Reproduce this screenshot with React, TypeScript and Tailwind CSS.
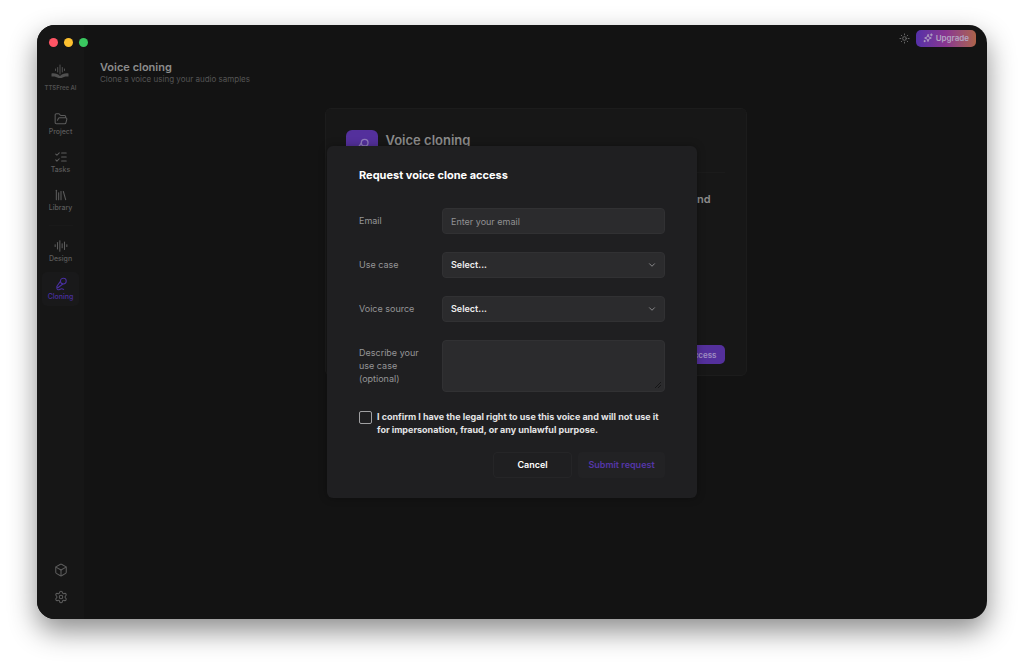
import { useState } from 'react'
import type { LucideIcon } from 'lucide-react'
import {
  AudioLines,
  Box,
  ChevronDown,
  FolderOpen,
  Library,
  ListChecks,
  MicVocal,
  Settings,
  Sun,
} from 'lucide-react'

const mainNav: NavEntry[] = [
  { label: 'Project', icon: FolderOpen },
  { label: 'Tasks', icon: ListChecks },
  { label: 'Library', icon: Library },
]

const voiceNav: NavEntry[] = [
  { label: 'Design', icon: AudioLines },
  { label: 'Cloning', icon: MicVocal, active: true },
]

const useCases = ['Podcast', 'Audiobook', 'Video narration', 'Accessibility']
const voiceSources = ['My own voice', 'Licensed voice actor']

const fieldClass =
  'block w-full rounded-[4px] border border-[#313133] bg-[#2b2b2d] px-2 text-[9px] outline-none'

type NavEntry = { label: string; icon: LucideIcon; active?: boolean }

function Logo() {
  return (
    <svg viewBox="0 0 20 16" className="h-4 w-5" fill="none" aria-hidden="true">
      <path
        d="M5.500 5v1.500M7.700 3.500v4.500M10 1v9M12.300 3.500v4.500M14.500 5v1.500"
        stroke="currentColor"
        strokeLinecap="round"
      />
      <path
        d="M1.500 9.500C5 9 8 10 10 12c2-2 5-3 8.500-2.500v3c-3-.3-5 .2-7 1.500h-3c-2-1.300-4-1.800-7-1.500z"
        fill="currentColor"
      />
    </svg>
  )
}

function SparkleIcon() {
  return (
    <svg
      viewBox="0 0 24 24"
      className="size-[10px]"
      fill="none"
      stroke="currentColor"
      strokeWidth="2.2"
      strokeLinecap="round"
      strokeLinejoin="round"
      aria-hidden="true"
    >
      <path d="M12 4l-2 5.500L4 12l6 2.500 2 6 2-6 6-2.500-6-2.500z" />
      <path d="M20 2v5M17.500 4.500h5M4 18v3M2.500 19.500h3" />
    </svg>
  )
}

function NavItem({ label, icon: Icon, active }: NavEntry) {
  return (
    <a
      href="#"
      aria-current={active ? 'page' : undefined}
      className={
        active
          ? 'flex h-[34px] w-[37px] flex-col items-center justify-center gap-0.5 rounded-[5px] bg-[#19191a] text-[#4a30a0]'
          : 'flex h-[34px] w-[37px] flex-col items-center justify-center gap-0.5 rounded-[5px] text-[#5c5c5c]'
      }
    >
      <Icon className="size-[14px]" strokeWidth={1.8} />
      <span className="text-[7px] leading-[8px] font-medium">{label}</span>
    </a>
  )
}

function Sidebar() {
  return (
    <aside className="flex w-[47px] shrink-0 flex-col items-center bg-[#161616] pt-[13px] pb-[15px]">
      <div className="ml-3 flex gap-[6px] self-start">
        <span className="size-[9px] shrink-0 rounded-full bg-[#ff5565]" />
        <span className="size-[9px] shrink-0 rounded-full bg-[#fdc02f]" />
        <span className="size-[9px] shrink-0 rounded-full bg-[#3ac860]" />
      </div>
      <div className="mt-[17px] flex flex-col items-center gap-1 text-[#505050]">
        <Logo />
        <span className="text-[6px] leading-[8px] font-semibold whitespace-nowrap">TTSFree AI</span>
      </div>
      <nav className="mt-[15px] flex flex-col items-center gap-1">
        {mainNav.map((item) => (
          <NavItem key={item.label} {...item} />
        ))}
        <div className="my-1 h-px w-6 bg-[#191919]" />
        {voiceNav.map((item) => (
          <NavItem key={item.label} {...item} />
        ))}
      </nav>
      <div className="mt-auto flex flex-col gap-[13px] text-[#5c5c5c]">
        <button type="button" aria-label="Models">
          <Box className="size-[14px]" strokeWidth={1.8} />
        </button>
        <button type="button" aria-label="Settings">
          <Settings className="size-[14px]" strokeWidth={1.8} />
        </button>
      </div>
    </aside>
  )
}

function TopBar() {
  return (
    <div className="flex h-[26px] items-center justify-end gap-[6px] pr-[11px]">
      <button type="button" aria-label="Toggle theme" className="text-[#6c6c6c]">
        <Sun className="size-[11px]" />
      </button>
      <button
        type="button"
        className="flex h-[17px] items-center gap-[3px] rounded-[5px] bg-linear-to-r from-[#5530a8] via-[#8a3590] to-[#ad6248] px-[7px] text-[8px] font-semibold text-[#b4a6c4]"
      >
        <SparkleIcon />
        Upgrade
      </button>
    </div>
  )
}

function CloningCard() {
  return (
    <section className="mx-auto mt-6 flex h-[268px] w-[422px] flex-col rounded-[6px] border border-[#1c1c1c] bg-[#171717] pt-[21px] pr-[21px] pb-[11px] pl-5">
      <div className="flex items-start gap-2">
        <span className="flex size-8 items-center justify-center rounded-[6px] bg-[#54309c] text-[#8f7bbb]">
          <MicVocal className="size-4" />
        </span>
        <h2 className="pt-[2px] text-[13px] leading-4 font-semibold text-[#8c8c8c]">Voice cloning</h2>
      </div>
      <div className="mt-[10px] h-px bg-[#1b1b1b]" />
      <p className="mt-[18px] pr-[14px] text-right text-[11px] leading-4 font-semibold text-[#8c8c8c]">
        Request access to clone a voice for your projects and
      </p>
      <button
        type="button"
        className="mt-auto h-[19px] self-end rounded-[5px] bg-[#54309c] px-2 text-[8px] font-semibold text-[#a191c4]"
      >
        Request access
      </button>
    </section>
  )
}

function SelectField({ id, label, options }: { id: string; label: string; options: string[] }) {
  return (
    <>
      <label htmlFor={id} className="self-center text-[9px] text-[#959597]">
        {label}
      </label>
      <div className="relative">
        <select id={id} className={`${fieldClass} h-[26px] appearance-none font-semibold text-[#ededee]`}>
          <option>Select...</option>
          {options.map((o) => (
            <option key={o}>{o}</option>
          ))}
        </select>
        <ChevronDown className="pointer-events-none absolute top-2 right-2 size-[10px] text-[#9b9b9d]" />
      </div>
    </>
  )
}

function RequestDialog() {
  const [confirmed, setConfirmed] = useState(false)

  return (
    <form
      role="dialog"
      aria-labelledby="dialog-title"
      className="w-[370px] rounded-[6px] bg-[#1f1f21] px-8 pt-[21px] pb-5 shadow-[0_0_8px_rgba(0,0,0,0.3)]"
      onSubmit={(e) => e.preventDefault()}
    >
      <h2 id="dialog-title" className="text-[11px] leading-4 font-bold text-white">
        Request voice clone access
      </h2>
      <div className="mt-[25px] grid grid-cols-[71px_1fr] gap-x-3 gap-y-[18px]">
        <label htmlFor="email" className="self-center text-[9px] text-[#959597]">
          Email
        </label>
        <input
          id="email"
          type="email"
          placeholder="Enter your email"
          className={`${fieldClass} h-[26px] text-[#ededee] placeholder:text-[#919193]`}
        />
        <SelectField id="use-case" label="Use case" options={useCases} />
        <SelectField id="voice-source" label="Voice source" options={voiceSources} />
        <label htmlFor="description" className="pt-[6px] text-[9px] leading-[13px] text-[#959597]">
          Describe your use case (optional)
        </label>
        <div className="relative">
          <textarea id="description" className={`${fieldClass} h-[52px] resize-none py-1 text-[#ededee]`} />
          <svg
            viewBox="0 0 6 6"
            className="pointer-events-none absolute right-1 bottom-1 size-[6px] text-[#161617]"
            stroke="currentColor"
            aria-hidden="true"
          >
            <path d="M0 6L6 0M3 6L6 3" />
          </svg>
        </div>
      </div>
      <label className="mt-[18px] flex items-start gap-[5px] text-[9px] leading-[13px] font-bold text-[#e4e4e5]">
        <input
          type="checkbox"
          checked={confirmed}
          onChange={(e) => setConfirmed(e.target.checked)}
          className="mt-px size-[13px] shrink-0 appearance-none rounded-[2px] border border-[#a0a0a2] checked:bg-[#5b35b5]"
        />
        I confirm I have the legal right to use this voice and will not use it for impersonation, fraud, or any
        unlawful purpose.
      </label>
      <div className="mt-4 flex justify-end gap-[6px] text-[9px] font-semibold">
        <button type="button" className="h-[26px] w-[79px] rounded-[4px] border border-[#252527] text-white">
          Cancel
        </button>
        <button
          type="submit"
          disabled={!confirmed}
          className="h-[26px] w-[87px] rounded-[4px] bg-[#222224] text-[#5536a8]"
        >
          Submit request
        </button>
      </div>
    </form>
  )
}

export default function App() {
  return (
    <div className="flex min-h-screen bg-white px-[37px] pt-[25px] pb-[49px] font-['Inter',sans-serif]">
      <div className="relative flex flex-1 overflow-hidden rounded-[18px] bg-[#131313] shadow-[0_12px_28px_rgba(0,0,0,0.45)]">
        <Sidebar />
        <main className="flex-1">
          <TopBar />
          <header className="px-4 pt-[9px]">
            <h1 className="text-[11px] leading-[14px] font-semibold text-[#8c8c8c]">Voice cloning</h1>
            <p className="text-[8px] leading-[10px] text-[#555555]">Clone a voice using your audio samples</p>
          </header>
          <CloningCard />
        </main>
        <div className="absolute inset-0 flex items-center justify-center">
          <RequestDialog />
        </div>
      </div>
    </div>
  )
}
